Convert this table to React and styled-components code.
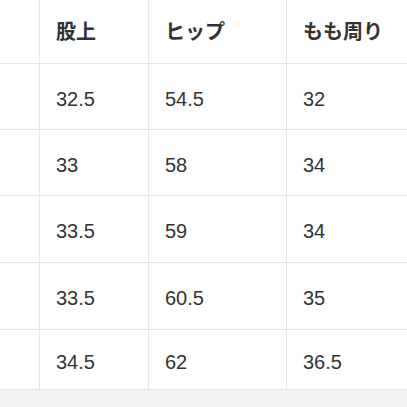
import styled, { createGlobalStyle } from 'styled-components';

const GlobalStyle = createGlobalStyle`
  html, body {
    margin: 0;
    padding: 0;
    background: #ffffff;
  }
  body {
    width: 407px;
    height: 407px;
    overflow: hidden;
    font-family: "Liberation Sans", "Noto Sans CJK JP", sans-serif;
    color: #333333;
  }
`;

const Page = styled.div`
  width: 407px;
  height: 407px;
  display: flex;
  flex-direction: column;
  background: #ffffff;
`;

const Table = styled.div`
  display: grid;
  grid-template-columns: 40px 109px 138px 1fr;
  grid-template-rows: 64px 66px 66px 67px 67px 59px;
`;

const Cell = styled.div`
  display: flex;
  align-items: center;
  padding: ${({ $head }) => ($head ? '0 16px 2px' : '5px 16px 0')};
  box-sizing: border-box;
  border-bottom: ${({ $last }) => ($last ? 'none' : '1px solid #e6e6e6')};
  border-right: ${({ $edge }) => ($edge ? 'none' : '1px solid #e6e6e6')};
  font-size: 20px;
  font-weight: ${({ $head }) => ($head ? 700 : 400)};
  font-family: ${({ $head }) =>
    $head
      ? '"Noto Sans CJK JP", "Liberation Sans", sans-serif'
      : '"Liberation Sans", "Noto Sans CJK JP", sans-serif'};
  color: #333333;
  white-space: nowrap;
  overflow: hidden;
`;

const Footer = styled.div`
  flex: 1;
  background: #f2f2f2;
  border-top: 1px solid #e4e4e4;
`;

const headers = ['', '股上', 'ヒップ', 'もも周り'];

const rows = [
  ['', '32.5', '54.5', '32'],
  ['', '33', '58', '34'],
  ['', '33.5', '59', '34'],
  ['', '33.5', '60.5', '35'],
  ['', '34.5', '62', '36.5'],
];

export default function App() {
  return (
    <Page>
      <GlobalStyle />
      <Table>
        {headers.map((h, i) => (
          <Cell key={`h${i}`} $head $edge={i === 3}>
            {h}
          </Cell>
        ))}
        {rows.map((row, r) =>
          row.map((v, i) => (
            <Cell key={`${r}-${i}`} $edge={i === 3} $last={r === rows.length - 1}>
              {v}
            </Cell>
          ))
        )}
      </Table>
      <Footer />
    </Page>
  );
}
